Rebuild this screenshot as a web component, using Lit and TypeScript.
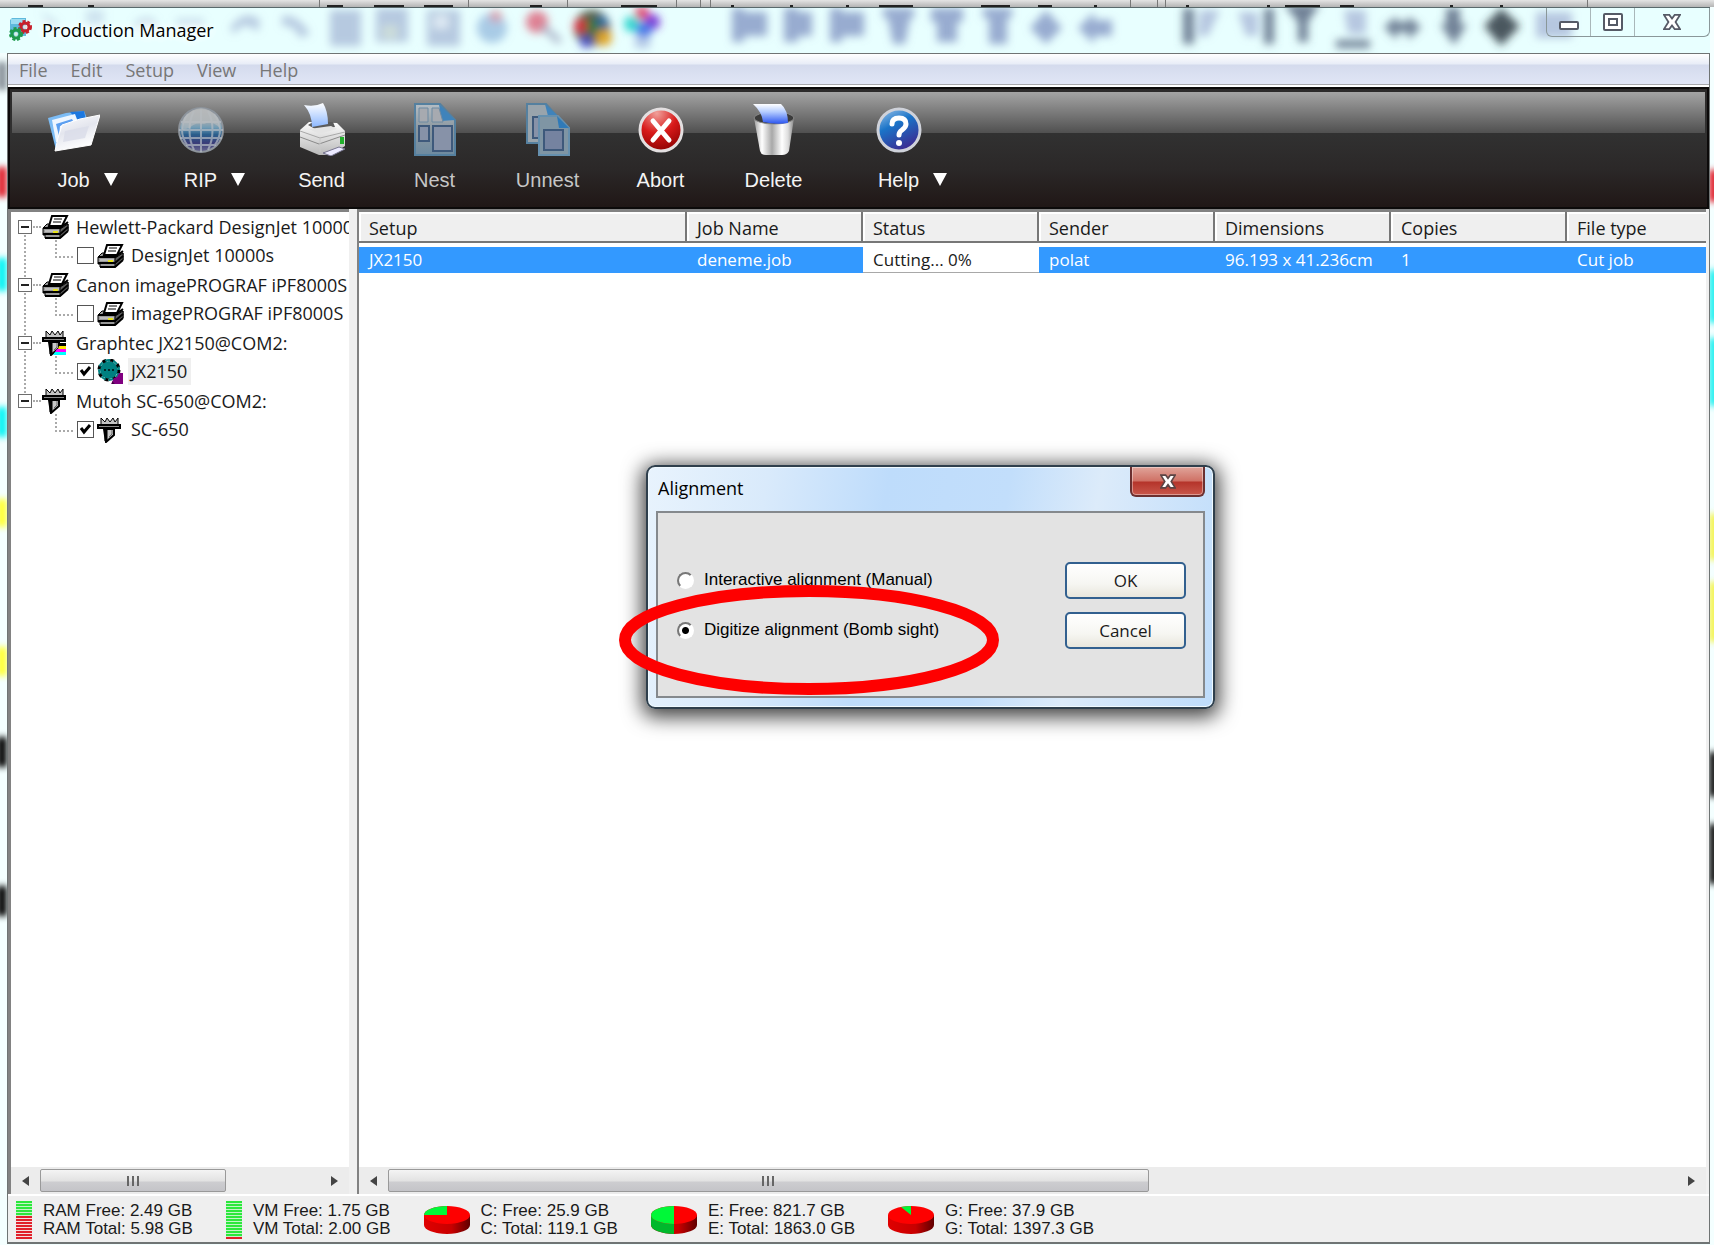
import { LitElement, html, svg, css, nothing } from "lit";
import { customElement, state } from "lit/decorators.js";
import { classMap } from "lit/directives/class-map.js";

type DeviceIcon = "printer" | "cutter" | "cutter-color" | "gear";

interface TreeChild {
  id: string;
  name: string;
  icon: DeviceIcon;
  checked: boolean;
  selected?: boolean;
}

interface TreeGroup {
  name: string;
  icon: DeviceIcon;
  children: TreeChild[];
}

interface Tool {
  label: string;
  icon: unknown;
  menu?: boolean;
  dim?: boolean;
}

const TREE: TreeGroup[] = [
  {
    name: "Hewlett-Packard DesignJet 10000s",
    icon: "printer",
    children: [{ id: "dj", name: "DesignJet 10000s", icon: "printer", checked: false }],
  },
  {
    name: "Canon imagePROGRAF iPF8000S",
    icon: "printer",
    children: [{ id: "ipf", name: "imagePROGRAF iPF8000S", icon: "printer", checked: false }],
  },
  {
    name: "Graphtec JX2150@COM2:",
    icon: "cutter-color",
    children: [{ id: "jx", name: "JX2150", icon: "gear", checked: true, selected: true }],
  },
  {
    name: "Mutoh SC-650@COM2:",
    icon: "cutter",
    children: [{ id: "sc", name: "SC-650", icon: "cutter", checked: true }],
  },
];

const COLUMNS = ["Setup", "Job Name", "Status", "Sender", "Dimensions", "Copies", "File type"];
const JOBS = [["JX2150", "deneme.job", "Cutting... 0%", "polat", "96.193 x 41.236cm", "1", "Cut job"]];

/* ---------- small device icons ---------- */

const printerIcon = html`<svg class="dev" width="28" height="26" viewBox="0 0 28 26" aria-hidden="true">
  <path d="M1 14 L5 10 H26 V17 L18 24 H3 V21 H1 Z" fill="#9a9a9a" stroke="#000" stroke-width="1" />
  <path d="M18 15 L26 10 V17 L18 24 Z" fill="#5e5e5e" stroke="#000" stroke-width="1" />
  <path d="M7 12 L10 2 H25 L20 12 Z" fill="#fff" stroke="#000" stroke-width="2" />
  <path d="M12 5 H20 M11 8 H19" stroke="#000" stroke-width="1" />
  <path d="M1 14 H18 L26 8" fill="none" stroke="#000" stroke-width="2" />
  <path d="M3 17 H17" stroke="#bdbdbd" stroke-width="2" />
  <path d="M11 18 H16" stroke="#e6e21c" stroke-width="2" />
  <path d="M1 20 H18 L26 13 M3 24 H18 L26 17" fill="none" stroke="#000" stroke-width="2" />
</svg>`;

const cutterBody = svg`
  <path d="M4 8 V1 L8 5 L10 1 L13 5 L16 1 L18 5 L21 1 V8 Z" fill="#c4c4c4" stroke="#000" stroke-width="1" />
  <path d="M1 8 H23 V11 H1 Z" fill="#8a8a8a" stroke="#000" stroke-width="2" />
  <path d="M7 12 H17 V18 L9 25 Z" fill="#c8c8c8" stroke="#000" stroke-width="2" />
  <path d="M9 12 V24" stroke="#000" stroke-width="3" />
  <path d="M15 13 V17 L12 20" stroke="#666" fill="none" />`;

const cutterIcon = html`<svg class="dev" width="28" height="26" viewBox="0 0 28 26" aria-hidden="true">
  ${cutterBody}
</svg>`;

const cutterColorIcon = html`<svg class="dev" width="28" height="26" viewBox="0 0 28 26" aria-hidden="true">
  ${cutterBody}
  <path d="M17 13 H24 V16 H17 Z" fill="#000" />
  <path d="M17 16 H24 V19 H16 Z" fill="#ffe600" />
  <path d="M15 19 H24 V22 H13 Z" fill="#f0f" />
  <path d="M13 22 H24 V25 H11 Z" fill="#0ff" />
</svg>`;

const gearIcon = html`<svg class="dev" width="28" height="26" viewBox="0 0 28 26" aria-hidden="true">
  <circle cx="12" cy="11" r="9" fill="#008080" />
  <circle cx="12" cy="11" r="10" fill="none" stroke="#000" stroke-width="3" stroke-dasharray="4 4" />
  <circle cx="12" cy="11" r="10" fill="none" stroke="#008080" stroke-width="2" stroke-dasharray="5 3" stroke-dashoffset="5" />
  <path d="M7 11 H18" stroke="#002a2a" stroke-width="2" stroke-dasharray="2 2" />
  <path d="M14 25 L17 19 L20 18 L22 14 H26 V25 Z" fill="#800080" />
  <path d="M13 20 L18 25 H15 V22 Z" fill="#400040" />
</svg>`;

const deviceIcon = (kind: DeviceIcon) =>
  kind === "printer" ? printerIcon : kind === "gear" ? gearIcon : kind === "cutter" ? cutterIcon : cutterColorIcon;

/* ---------- toolbar icons ---------- */

const jobIcon = html`<svg width="52" height="54" viewBox="0 0 52 54" aria-hidden="true">
  <defs>
    <linearGradient id="fold" x1="0" y1="0" x2="0.4" y2="1">
      <stop offset="0" stop-color="#fff" /><stop offset="0.5" stop-color="#e4e6ee" /><stop offset="1" stop-color="#fff" />
    </linearGradient>
  </defs>
  <path d="M0 16 L18 11 L36 9 L38 14 L42 30 L8 48 Z" fill="#7cbcf5" />
  <path d="M22 10 L36 9 L38 18 L30 19 Z" fill="#1c78e0" />
  <path d="M4 18 L27 12 L30 20 L14 40 L8 40 Z" fill="#eef6ff" />
  <path d="M8 22 L24 17 L26 21 L12 24 L11 34 Z" fill="#5c9ff0" />
  <path d="M14 23 L32 17 L52 13 L43 43 L7 49 L10 36 Z" fill="url(#fold)" stroke="#fff" stroke-width="1" />
  <path d="M17 29 L41 24 L37 36 L15 40 Z" fill="#d9dce8" opacity="0.8" />
</svg>`;

const ripIcon = html`<svg width="46" height="54" viewBox="0 0 46 54" aria-hidden="true">
  <defs>
    <linearGradient id="globe" x1="0" y1="0" x2="0" y2="1">
      <stop offset="0" stop-color="#b4b4b4" /><stop offset="0.3" stop-color="#a3abb0" /><stop offset="0.45" stop-color="#6f9bb5" />
      <stop offset="0.6" stop-color="#2a5f8c" /><stop offset="0.8" stop-color="#3a3c78" /><stop offset="1" stop-color="#6c6c92" />
    </linearGradient>
  </defs>
  <circle cx="23" cy="28" r="22" fill="url(#globe)" stroke="#8d949c" stroke-width="2" />
  <g fill="none" stroke="#b5bcc4" stroke-width="2" opacity="0.7">
    <path d="M3 20 H43 M1 28 H45 M2 36 H44 M8 43 H38" />
    <path d="M23 8 V50 M16 9 C10 20 10 36 16 48 M30 9 C36 20 36 36 30 48 M10 12 C2 22 2 34 10 44 M36 12 C44 22 44 34 36 44" />
  </g>
  <path d="M6 16 Q23 -4 40 16 L42 26 Q34 18 26 22 Q16 20 12 26 L4 28 Z" fill="#b9bcbe" opacity="0.6" />
</svg>`;

const sendIcon = html`<svg width="46" height="54" viewBox="0 0 46 54" aria-hidden="true">
  <defs>
    <linearGradient id="sheet" x1="0" y1="0" x2="0" y2="1">
      <stop offset="0" stop-color="#fff" /><stop offset="1" stop-color="#8db8ff" />
    </linearGradient>
    <linearGradient id="box" x1="0" y1="0" x2="0" y2="1">
      <stop offset="0" stop-color="#fdfdfd" /><stop offset="1" stop-color="#b9b9b9" />
    </linearGradient>
  </defs>
  <path d="M1 28 L10 20 L38 21 L46 29 V44 L32 53 H20 L1 45 Z" fill="url(#box)" />
  <path d="M1 29 L21 36 L46 30" fill="none" stroke="#a8a8a8" stroke-width="1" />
  <path d="M1 35 L20 42 L46 33" fill="none" stroke="#8a8a8a" stroke-width="1" />
  <path d="M9 23 L14 20 H34 L36 25 L18 28 Z" fill="#5b5b5b" />
  <path d="M5 3 Q16 5 24 1 Q29 9 29 22 L13 25 Q13 12 5 3 Z" fill="url(#sheet)" />
  <path d="M10 27 L32 24 L38 27 L20 32 Z" fill="#e4e4e4" />
  <path d="M21 37 V50" stroke="#c9c9c9" />
  <path d="M24 51 L40 45 L46 47 L32 54 Z" fill="#eceaff" stroke="#77758f" stroke-width="1" />
  <rect x="41" y="35" width="4" height="7" fill="#21b02c" />
</svg>`;

const nestIcon = html`<svg width="42" height="54" viewBox="0 0 42 54" aria-hidden="true">
  <defs>
    <linearGradient id="page" x1="0" y1="0" x2="0" y2="1">
      <stop offset="0" stop-color="#b5bdc4" /><stop offset="0.5" stop-color="#8b979f" /><stop offset="1" stop-color="#6d8aa0" />
    </linearGradient>
  </defs>
  <path d="M1 2 H26 L41 18 V53 H1 Z" fill="url(#page)" stroke="#55809f" stroke-width="2" />
  <path d="M25 2 L41 18 L27 19 Z" fill="#3f83bb" />
  <g fill="#8792a8" stroke="#3e597b" stroke-width="2">
    <rect x="5" y="24" width="10" height="15" />
    <rect x="19" y="24" width="19" height="25" />
  </g>
  <path d="M5 6 H14 V20 H5 Z M18 6 H25 L29 20 H18 Z" fill="#a7aab0" stroke="#6d8aa2" stroke-width="1" />
</svg>`;

const unnestIcon = html`<svg width="44" height="54" viewBox="0 0 44 54" aria-hidden="true">
  <path d="M1 2 H20 L30 13 V41 H1 Z" fill="#99a4ac" stroke="#55809f" stroke-width="2" />
  <path d="M19 2 L32 14 H22 Z" fill="#3f83bb" />
  <rect x="7" y="15" width="12" height="21" fill="#8792a8" stroke="#3e597b" stroke-width="2" />
  <path d="M13 14 H32 L43 26 V53 H13 Z" fill="#7f95a4" stroke="#6690ae" stroke-width="2" />
  <path d="M31 14 L43 26 H33 Z" fill="#2f7ab8" />
  <rect x="18" y="28" width="19" height="20" fill="#7583a0" stroke="#3e597b" stroke-width="2" />
</svg>`;

const abortIcon = html`<svg width="46" height="54" viewBox="0 0 46 54" aria-hidden="true">
  <defs>
    <radialGradient id="red" cx="0.4" cy="0.1" r="0.95">
      <stop offset="0" stop-color="#f0a09a" /><stop offset="0.5" stop-color="#d81a1a" /><stop offset="1" stop-color="#8a0000" />
    </radialGradient>
  </defs>
  <circle cx="23" cy="28" r="21" fill="url(#red)" stroke="#e3dfe0" stroke-width="3" />
  <path d="M15 19 L31 38 M31 19 L15 38" stroke="#fff" stroke-width="5" stroke-linecap="round" />
</svg>`;

const deleteIcon = html`<svg width="42" height="54" viewBox="0 0 42 54" aria-hidden="true">
  <defs>
    <linearGradient id="bin" x1="0" y1="0" x2="1" y2="0">
      <stop offset="0" stop-color="#9d9d9d" /><stop offset="0.2" stop-color="#fff" /><stop offset="0.45" stop-color="#a8a8a8" />
      <stop offset="0.7" stop-color="#fff" /><stop offset="0.85" stop-color="#ddd" /><stop offset="1" stop-color="#888" />
    </linearGradient>
    <linearGradient id="note" x1="0" y1="0" x2="0" y2="1">
      <stop offset="0" stop-color="#fff" /><stop offset="0.4" stop-color="#b4ccff" /><stop offset="1" stop-color="#2b55f0" />
    </linearGradient>
  </defs>
  <path d="M1 16 H41 L36 49 Q34 53 29 53 H13 Q8 53 7 49 Z" fill="url(#bin)" />
  <ellipse cx="21" cy="16" rx="20" ry="6" fill="#3b3b3b" stroke="#8a8a8a" stroke-width="1" />
  <path d="M0 2 H28 Q35 8 35 21 Q23 23 10 20 Q9 10 0 2 Z" fill="url(#note)" />
</svg>`;

const helpIcon = html`<svg width="46" height="54" viewBox="0 0 46 54" aria-hidden="true">
  <defs>
    <linearGradient id="blue" x1="0" y1="0" x2="0.5" y2="1">
      <stop offset="0" stop-color="#a4c8ea" /><stop offset="0.45" stop-color="#1a74c8" /><stop offset="1" stop-color="#3a2f94" />
    </linearGradient>
  </defs>
  <circle cx="23" cy="28" r="21" fill="url(#blue)" stroke="#cfd2da" stroke-width="3" />
  <path d="M16 22 Q16 16 23 16 Q30 16 30 22 Q30 25 26 28 Q23 30 23 33" fill="none" stroke="#fff" stroke-width="5" stroke-linecap="round" />
  <circle cx="23" cy="41" r="3" fill="#fff" />
</svg>`;

const TOOL_GROUPS: Tool[][] = [
  [
    { label: "Job", icon: jobIcon, menu: true },
    { label: "RIP", icon: ripIcon, menu: true },
  ],
  [
    { label: "Send", icon: sendIcon },
    { label: "Nest", icon: nestIcon, dim: true },
    { label: "Unnest", icon: unnestIcon, dim: true },
    { label: "Abort", icon: abortIcon },
    { label: "Delete", icon: deleteIcon },
  ],
  [{ label: "Help", icon: helpIcon, menu: true }],
];

/* ---------- status bar ---------- */

const memoryBar = (freeRows: number) => html`<svg width="16" height="38" viewBox="0 0 16 38" aria-hidden="true">
  <rect width="16" height="38" fill="#f4dede" />
  <rect width="16" height=${freeRows * 3} fill="#c4f4c8" />
  ${Array.from({ length: 13 }, (_, i) =>
    i < freeRows
      ? svg`<rect y=${i * 3} width="16" height="2" fill="#2be83c" />`
      : svg`<rect y=${i * 3} width="16" height="2" fill="#e0202a" />`
  )}
</svg>`;

const pie = (id: string, slice: unknown, side: unknown = nothing) => html`<svg width="46" height="30" viewBox="0 0 46 30" aria-hidden="true">
  <defs>
    <linearGradient id=${id} x1="0" y1="0" x2="1" y2="0">
      <stop offset="0" stop-color="#e00000" /><stop offset="0.6" stop-color="#c80000" /><stop offset="1" stop-color="#600000" />
    </linearGradient>
  </defs>
  <path d="M0 10 V20 A23 9 0 0 0 46 20 V10 Z" fill="url(#${id})" />
  ${side}
  <ellipse cx="23" cy="10" rx="23" ry="9" fill="#fe0000" />
  ${slice}
</svg>`;

const STATUS = [
  { icon: memoryBar(5), free: "RAM Free: 2.49 GB", total: "RAM Total: 5.98 GB" },
  { icon: memoryBar(12), free: "VM Free: 1.75 GB", total: "VM Total: 2.00 GB" },
  {
    icon: pie("pie-c", svg`<path d="M23 10 H0 A23 9 0 0 1 23 1 Z" fill="#00f838" />`),
    free: "C: Free: 25.9 GB",
    total: "C: Total: 119.1 GB",
  },
  {
    icon: pie(
      "pie-e",
      svg`<path d="M23 1 A23 9 0 0 0 23 19 Z" fill="#00f838" />`,
      svg`<path d="M0 10 V20 A23 9 0 0 0 23 29 V10 Z" fill="#00b82c" />`
    ),
    free: "E: Free: 821.7 GB",
    total: "E: Total: 1863.0 GB",
  },
  {
    icon: pie("pie-g", svg`<path d="M23 10 L13 2 Q18 1 23 1 Z" fill="#00f838" />`),
    free: "G: Free: 37.9 GB",
    total: "G: Total: 1397.3 GB",
  },
];

/* ---------- application behind the glass frame ---------- */

const mark = (x: number, w: number) => svg`<rect x=${x} y="5" width=${w} height="2" fill="#222" />`;
const sep = (x: number) => svg`<rect x=${x} y="0" width="1" height="7" fill="#777" />`;
const spot = (side: "l" | "r", y: number, h: number, color: string) =>
  html`<i class="spot ${side}" style="top:${y}px;height:${h}px;background:${color}"></i>`;

const behindStrip = html`<svg class="strip" width="2400" height="8" aria-hidden="true">
  ${[319, 468, 567, 676, 700, 710, 1130, 1157, 1165, 1587].map(sep)}
  ${[[28, 15], [88, 6], [327, 16], [374, 30], [424, 29], [530, 12], [621, 36], [731, 3], [790, 3], [846, 3], [879, 34], [981, 29], [1038, 14], [1094, 3], [1186, 3], [1267, 3], [1285, 35], [1340, 14], [1450, 3], [1500, 3]].map(
    ([x, w]) => mark(x, w)
  )}
</svg>`;

const glassBlobs = html`<svg class="blobs" width="2400" height="46" aria-hidden="true">
  <defs>
    <filter id="soft" x="-20%" y="-60%" width="140%" height="220%"><feGaussianBlur stdDeviation="4" /></filter>
  </defs>
  <g filter="url(#soft)">
    <g fill="#94a6cc" opacity="0.6">
      <path d="M40 2 L60 16 L50 20 Z M86 2 H104 V16 H86 Z M134 14 Q146 4 156 12 V20 H134 Z M176 10 H204 V18 H176 Z" opacity="0.5" />
      <path d="M230 20 Q244 0 260 12 L258 24 Q244 10 234 26 Z M282 8 Q298 6 310 26 L300 30 Q294 16 282 18 Z" />
      <path d="M330 2 H361 V38 H330 Z M376 0 H408 V34 H376 Z M427 2 H460 V38 H427 Z" />
    </g>
    <rect x="383" y="18" width="14" height="12" fill="#cfe0d8" opacity="0.9" />
    <rect x="434" y="8" width="14" height="12" fill="#dfeaf4" />
    <circle cx="492" cy="20" r="15" fill="#7fa9d6" opacity="0.6" />
    <circle cx="496" cy="8" r="6" fill="#e28a94" opacity="0.7" />
    <circle cx="537" cy="14" r="11" fill="#dc4a64" opacity="0.7" />
    <path d="M542 18 L560 34" stroke="#9a9fb8" stroke-width="7" opacity="0.7" />
    <circle cx="592" cy="20" r="18" fill="#56604e" />
    <circle cx="581" cy="18" r="7" fill="#d6283c" />
    <circle cx="604" cy="30" r="8" fill="#e0a628" />
    <circle cx="602" cy="14" r="6" fill="#2c6aa0" />
    <circle cx="586" cy="34" r="6" fill="#5050c8" />
    <circle cx="592" cy="18" r="6" fill="#2c7a34" />
    <circle cx="632" cy="16" r="8" fill="#30d8d0" />
    <circle cx="652" cy="14" r="8" fill="#7a38d8" />
    <circle cx="642" cy="5" r="7" fill="#e04870" />
    <circle cx="644" cy="22" r="8" fill="#4878e8" />
    <rect x="635" y="28" width="15" height="12" fill="#a8bce0" opacity="0.8" />
    <g fill="#7c90c0" opacity="0.75">
      <path d="M732 0 H744 V34 H732 Z M742 4 H767 V28 H742 Z" />
      <path d="M784 0 H798 V34 H784 Z M794 4 H812 V28 H794 Z" />
      <path d="M830 0 H842 V34 H830 Z M842 4 H864 V28 H842 Z" />
      <path d="M883 0 H914 V10 H910 L905 36 H893 L888 10 H883 Z" />
      <path d="M931 0 H963 V14 H957 V34 H937 V14 H931 Z" />
      <path d="M983 0 H1012 V10 H1007 V36 H989 V10 H983 Z" />
      <path d="M1046 2 L1062 20 L1046 36 L1030 20 Z M1078 20 L1094 4 V12 H1112 V28 H1094 V36 Z" />
    </g>
    <g fill="#5c6b84" opacity="0.85">
      <path d="M1183 0 H1194 V36 H1183 Z" />
      <path d="M1264 0 H1274 V36 H1264 Z" />
      <path d="M1284 -4 H1320 L1308 14 V34 H1298 V14 Z" />
      <path d="M1336 32 H1370 V40 H1336 Z" />
      <path d="M1384 19 L1397 8 V14 H1408 V8 L1421 19 L1408 32 V24 H1397 V32 Z" />
      <path d="M1446 0 H1460 V16 H1467 L1454 37 L1440 16 H1446 Z" />
      <path d="M1501 0 L1520 18 L1501 38 L1484 18 Z" fill="#2d3a42" />
    </g>
    <g fill="#94a2cc" opacity="0.6">
      <path d="M1200 2 H1220 L1208 28 H1198 Z M1238 4 H1258 V28 H1246 Z M1344 2 H1366 V26 H1348 Z M1536 4 H1572 V30 H1536 Z" />
    </g>
  </g>
</svg>`;

@customElement("app-root")
export class AppRoot extends LitElement {
  @state() private alignment = "digitize";

  static styles = css`
    :host {
      display: block;
      font-family: "Open Sans", "Noto Sans", sans-serif;
      font-size: 18px;
      line-height: 24px;
      color: #1a1a1a;
    }
    * {
      box-sizing: border-box;
    }
    button,
    input {
      font: inherit;
      color: inherit;
      margin: 0;
    }
    svg {
      display: block;
      flex: none;
    }
    .desktop {
      position: relative;
      overflow: hidden;
      min-height: 100vh;
      display: flex;
      flex-direction: column;
      padding: 7px 4px 1px 0;
      background: linear-gradient(#e4e4e4, #b4b4b4 7px, #f4ffff 7px);
    }
    .strip,
    .blobs {
      position: absolute;
      left: 0;
      top: 0;
    }
    .spot {
      position: absolute;
      width: 10px;
      filter: blur(3px);
    }
    .spot.l {
      left: -3px;
    }
    .spot.r {
      right: -5px;
    }
    .window {
      position: relative;
      flex: 1;
      display: flex;
      flex-direction: column;
      border-top: 1px solid #59696c;
    }
    .titlebar {
      position: relative;
      overflow: hidden;
      height: 45px;
      display: flex;
      align-items: center;
      gap: 9px;
      padding: 0 0 2px 8px;
      background: #e8ffff;
    }
    .titlebar .logo,
    .titlebar .title {
      position: relative;
    }
    .title {
      flex: 1;
      margin: 0;
      font-size: 18px;
      font-weight: 400;
      color: #000;
      text-shadow: 0 0 8px #fff, 0 0 8px #fff, 0 0 12px #fff;
    }
    .caption {
      position: relative;
      align-self: flex-start;
      display: flex;
      height: 29px;
      border: 1px solid #8a9799;
      border-top: 0;
      border-radius: 0 0 6px 6px;
    }
    .caption button {
      display: grid;
      place-items: center;
      width: 44px;
      padding: 0;
      border: 0;
      border-right: 1px solid #a9b7b9;
      background: none;
    }
    .caption button:last-child {
      width: 74px;
      border-right: 0;
    }
    .frame {
      flex: 1;
      display: flex;
      flex-direction: column;
      margin-left: 7px;
      border: 1px solid #6f7474;
      border-width: 1px 1px 2px;
      background: #f0f0f0;
    }
    .menubar {
      display: flex;
      gap: 1px;
      height: 33px;
      align-items: center;
      border-bottom: 2px solid #fff;
      box-shadow: inset 0 -1px #a8a8ac;
      background: linear-gradient(#fff, #e8edf7 10px, #d4dbed 11px, #e1e6f6);
    }
    .menubar button {
      padding: 0 11px;
      border: 0;
      background: none;
      color: #777;
    }
    .toolbar {
      display: flex;
      height: 122px;
      border: 2px solid #0c0a0a;
      padding: 13px 7px 0;
      background: linear-gradient(#a4a4a4, #505050) 2px 3px / calc(100% - 4px) 41px no-repeat,
        linear-gradient(#2c2a2a, #313131 45px, #2b2828 80px, #201716);
      color: #f4f4f4;
      font-family: "Liberation Sans", Arial, sans-serif;
      font-size: 20px;
    }
    .tool-group {
      display: flex;
    }
    .tool-group:first-child {
      gap: 6px;
    }
    .tool-group:last-child {
      margin-left: 12px;
    }
    .tool {
      display: flex;
      flex-direction: column;
      align-items: center;
      width: 113px;
      padding: 0;
      border: 0;
      background: none;
    }
    .tool.menu {
      margin-right: 8px;
    }
    .tool-group:first-child .tool:last-child {
      margin-right: 0;
      width: 121px;
      padding-right: 8px;
    }
    .tool.dim {
      color: #c6c6c6;
    }
    .tool-label {
      display: grid;
      grid-template-columns: 1fr auto 1fr;
      width: 100%;
      margin-top: 12px;
    }
    .tool-label span {
      grid-column: 2;
    }
    .tool-label .drop {
      grid-column: 3;
      margin: 5px 0 0 14px;
    }
    .panes {
      flex: 1;
      display: grid;
      grid-template-columns: 341px minmax(0, 1fr);
      gap: 8px;
      padding-right: 3px;
    }
    .pane {
      display: flex;
      flex-direction: column;
      min-width: 0;
      border-top: 3px solid #828282;
      border-left: 3px solid #828282;
      background: #fff;
    }
    .jobs {
      border-left-width: 2px;
    }
    .pane-body {
      flex: 1;
      overflow: hidden;
    }
    .tree,
    .tree ul {
      list-style: none;
      margin: 0;
      padding: 0;
      white-space: nowrap;
    }
    .tree-row {
      display: flex;
      align-items: center;
      height: 29px;
    }
    .group {
      position: relative;
    }
    .group:not(:last-child)::before {
      content: "";
      position: absolute;
      left: 13px;
      top: 15px;
      height: 58px;
      border-left: 2px dotted #aaa;
    }
    .group > .tree-row {
      padding-left: 7px;
    }
    .expander {
      position: relative;
      flex: none;
      display: grid;
      place-items: center;
      width: 14px;
      height: 14px;
      padding: 0;
      border: 1px solid #6d6d6d;
      background: #fff;
    }
    .expander::before {
      content: "";
      width: 8px;
      height: 2px;
      background: #222;
    }
    .dots {
      flex: none;
      width: 8px;
      border-top: 2px dotted #aaa;
      margin: 0 1px;
    }
    .group > .tree-row .name {
      margin-left: 6px;
    }
    .branch {
      flex: none;
      width: 18px;
      height: 18px;
      margin: 0 4px 14px 44px;
      border: 2px dotted #aaa;
      border-width: 0 0 2px 2px;
    }
    .check {
      appearance: none;
      flex: none;
      width: 17px;
      height: 17px;
      margin-right: 3px;
      border: 1px solid #555;
      background: #fff;
    }
    .check:checked {
      background: #fff
        url('data:image/svg+xml,<svg xmlns="http://www.w3.org/2000/svg" viewBox="0 0 15 15"><path d="M3 6 L6 10 L12 3" fill="none" stroke="black" stroke-width="3"/></svg>')
        center / 15px no-repeat;
    }
    .child {
      display: flex;
      align-items: center;
    }
    .child .name {
      padding: 0 4px 0 3px;
      margin-left: 3px;
      line-height: 27px;
    }
    .child .name.selected {
      background: #efefef;
    }
    table {
      width: 100%;
      table-layout: fixed;
      border-collapse: separate;
      border-spacing: 0;
      white-space: nowrap;
    }
    .c-wide {
      width: 328px;
    }
    .c {
      width: 176px;
    }
    th,
    td {
      padding: 0 0 0 10px;
      text-align: left;
      font-weight: 400;
      overflow: hidden;
    }
    th {
      height: 31px;
      padding-top: 3px;
      background: #efefef;
      border-right: 2px solid #777;
      border-bottom: 2px solid #777;
      box-shadow: inset 2px 2px #fff;
    }
    th:last-child {
      border-right: 0;
    }
    td {
      height: 30px;
      font-size: 17px;
      border-top: 4px solid #fff;
      background: #3399ff;
      color: #fff;
    }
    td.status {
      background: #fff;
      color: #1a1a1a;
      border-bottom: 1px solid #a8a8a8;
    }
    .scroll {
      display: flex;
      align-items: center;
      justify-content: space-between;
      height: 27px;
      background: #ececec;
    }
    .scroll button {
      display: grid;
      place-items: center;
      width: 29px;
      height: 27px;
      padding: 0;
      border: 0;
      background: none;
    }
    .track {
      flex: 1;
    }
    .thumb {
      display: flex;
      align-items: center;
      justify-content: center;
      gap: 3px;
      width: 186px;
      height: 23px;
      border: 1px solid #999;
      border-radius: 2px;
      background: linear-gradient(#f4f4f4, #e2e2e2 11px, #cdcdd0 12px, #c4c4c8);
    }
    .thumb i {
      width: 2px;
      height: 10px;
      background: #666;
    }
    .jobs .thumb {
      width: 59%;
    }
    .statusbar {
      display: flex;
      align-items: center;
      gap: 33px;
      height: 48px;
      padding: 2px 8px 0;
      border-top: 2px solid #fff;
      background: #efefef;
      font-family: "Liberation Sans", Arial, sans-serif;
      font-size: 17px;
      line-height: 18px;
      white-space: nowrap;
    }
    .stat {
      display: flex;
      align-items: center;
      gap: 11px;
    }
    .stat p {
      margin: 0;
    }
    .dialog {
      position: absolute;
      left: 646px;
      top: 465px;
      width: 569px;
      height: 244px;
      display: flex;
      flex-direction: column;
      padding: 0 8px 9px;
      border: 2px solid #2f3f4c;
      border-radius: 9px;
      background: linear-gradient(100deg, #e8f3fd, #d9eafb 20%, #bedcfb 40%, #c2defb 60%, #dcebfa 75%, #bedcfb);
      box-shadow: inset 0 0 0 1px #f0faff, 0 4px 20px 4px rgba(0, 0, 0, 0.75);
    }
    .dialog-bar {
      display: flex;
      height: 44px;
      justify-content: space-between;
    }
    .dialog-bar h2 {
      margin: 9px 0 0 2px;
      font-size: 18px;
      font-weight: 400;
      color: #000;
    }
    .close {
      display: grid;
      place-items: center;
      width: 75px;
      height: 30px;
      padding: 0;
      border: 2px solid #6b3030;
      border-top: 0;
      border-radius: 0 0 6px 6px;
      background: linear-gradient(#e0a49a, #cf7165 14px, #b5342a 15px, #c8574b);
      box-shadow: inset 0 0 0 1px rgba(255, 255, 255, 0.4);
    }
    .client {
      flex: 1;
      display: flex;
      justify-content: space-between;
      padding: 49px 17px 0 19px;
      border: 2px solid #85898d;
      background: #e3e3e3;
    }
    .options {
      display: flex;
      flex-direction: column;
      gap: 14px;
    }
    .options label {
      display: flex;
      align-items: center;
      gap: 10px;
      height: 36px;
      font-family: "Liberation Sans", Arial, sans-serif;
      font-size: 17px;
      color: #000;
    }
    .radio {
      appearance: none;
      width: 17px;
      height: 17px;
      border: 2px solid;
      border-color: #777 #fff #fff #777;
      border-radius: 50%;
      background: #fff;
    }
    .radio:checked {
      background: radial-gradient(#000 3px, #fff 4px);
    }
    .actions {
      display: flex;
      flex-direction: column;
      gap: 13px;
    }
    .actions button {
      width: 121px;
      height: 37px;
      padding: 0;
      border: 2px solid #32608f;
      border-radius: 5px;
      background: linear-gradient(#fff, #f6f6f2 60%, #e8e6dc);
      font-size: 17px;
    }
    .ring {
      position: absolute;
      left: 619px;
      top: 585px;
      pointer-events: none;
    }
  `;

  private renderTool(tool: Tool) {
    return html`<button class=${classMap({ tool: true, menu: !!tool.menu, dim: !!tool.dim })}>
      ${tool.icon}
      <span class="tool-label">
        <span>${tool.label}</span>
        ${tool.menu
          ? html`<svg class="drop" width="14" height="14" viewBox="0 0 14 14" aria-hidden="true">
              <path d="M0 0 H14 L7 13 Z" fill="#fff" />
            </svg>`
          : nothing}
      </span>
    </button>`;
  }

  private renderGroup(group: TreeGroup) {
    return html`<li class="group">
      <div class="tree-row">
        <button class="expander" aria-label="Collapse ${group.name}"></button>
        <span class="dots"></span>${deviceIcon(group.icon)}<span class="name">${group.name}</span>
      </div>
      <ul>
        ${group.children.map(
          (c) => html`<li class="tree-row">
            <span class="branch"></span>
            <input class="check" type="checkbox" id=${c.id} .checked=${c.checked} />
            <label class="child" for=${c.id}>
              ${deviceIcon(c.icon)}<span class=${classMap({ name: true, selected: !!c.selected })}>${c.name}</span>
            </label>
          </li>`
        )}
      </ul>
    </li>`;
  }

  private renderScroll() {
    return html`<div class="scroll">
      <button aria-label="Scroll left">
        <svg width="7" height="10" viewBox="0 0 7 10"><path d="M7 0 V10 L0 5 Z" fill="#444" /></svg>
      </button>
      <div class="track"><div class="thumb"><i></i><i></i><i></i></div></div>
      <button aria-label="Scroll right">
        <svg width="7" height="10" viewBox="0 0 7 10"><path d="M0 0 V10 L7 5 Z" fill="#444" /></svg>
      </button>
    </div>`;
  }

  private renderRadio(value: string, label: string) {
    return html`<label>
      <input
        class="radio"
        type="radio"
        name="alignment"
        .checked=${this.alignment === value}
        @change=${() => (this.alignment = value)}
      />${label}
    </label>`;
  }

  render() {
    return html`<div class="desktop">
      ${behindStrip}
      ${spot("l", 62, 28, "#8a949c")} ${spot("l", 167, 30, "#e0202c")} ${spot("l", 258, 33, "#00f4f4")}
      ${spot("l", 407, 30, "#00f4f4")} ${spot("l", 499, 28, "#ffff30")} ${spot("l", 647, 29, "#ffff30")}
      ${spot("l", 737, 30, "#000")} ${spot("l", 886, 30, "#000")}
      ${spot("r", 170, 32, "#e0202c")} ${spot("r", 270, 53, "#20f0f0")} ${spot("r", 338, 68, "#20f0f0")}
      ${spot("r", 514, 46, "#f4f450")} ${spot("r", 582, 60, "#f4f450")} ${spot("r", 752, 45, "#111")}
      ${spot("r", 824, 60, "#111")}
      <main class="window">
        <header class="titlebar">
          ${glassBlobs}
          <svg class="logo" width="25" height="26" viewBox="0 0 25 26" aria-hidden="true">
            <path d="M2 3 L4 1 H18 V19 H2 Z" fill="#5fb9dc" />
            <path d="M3 2 H17 V7 H3 Z" fill="#9bdcf0" />
            <circle cx="17" cy="10" r="4" fill="none" stroke="#c8202c" stroke-width="3" />
            <circle cx="17" cy="10" r="6" fill="none" stroke="#c8202c" stroke-width="2" stroke-dasharray="3 2" />
            <circle cx="8" cy="17" r="4" fill="none" stroke="#1f9a4c" stroke-width="3" />
            <circle cx="8" cy="17" r="6" fill="none" stroke="#1f9a4c" stroke-width="2" stroke-dasharray="3 2" />
            <circle cx="17" cy="10" r="2" fill="#e6dfe2" />
            <circle cx="8" cy="17" r="2" fill="#d6f0e4" />
          </svg>
          <h1 class="title">Production Manager</h1>
          <div class="caption">
            <button aria-label="Minimize">
              <svg width="20" height="20" viewBox="0 0 20 20">
                <rect x="1" y="10" width="18" height="7" rx="1" fill="#fff" stroke="#555a66" stroke-width="2" />
              </svg>
            </button>
            <button aria-label="Restore">
              <svg width="20" height="18" viewBox="0 0 20 18">
                <rect x="1" y="1" width="18" height="16" rx="1" fill="#fff" stroke="#555a66" stroke-width="2" />
                <rect x="6" y="6" width="8" height="6" fill="#fff" stroke="#555a66" stroke-width="2" />
              </svg>
            </button>
            <button aria-label="Close">
              <svg width="18" height="16" viewBox="0 0 20 18">
                <path d="M1 1 H7 L10 5 L13 1 H19 L14 9 L19 17 H13 L10 13 L7 17 H1 L6 9 Z" fill="#fff" stroke="#555a66" stroke-width="2" />
              </svg>
            </button>
          </div>
        </header>
        <div class="frame">
          <nav class="menubar">
            ${["File", "Edit", "Setup", "View", "Help"].map((m) => html`<button>${m}</button>`)}
          </nav>
          <div class="toolbar">
            ${TOOL_GROUPS.map((g) => html`<div class="tool-group">${g.map((t) => this.renderTool(t))}</div>`)}
          </div>
          <div class="panes">
            <section class="pane">
              <div class="pane-body">
                <ul class="tree">
                  ${TREE.map((g) => this.renderGroup(g))}
                </ul>
              </div>
              ${this.renderScroll()}
            </section>
            <section class="pane jobs">
              <div class="pane-body">
                <table>
                  <colgroup>
                    <col class="c-wide" />
                    <col class="c" /><col class="c" /><col class="c" /><col class="c" /><col class="c" />
                    <col />
                  </colgroup>
                  <thead>
                    <tr>
                      ${COLUMNS.map((c) => html`<th scope="col">${c}</th>`)}
                    </tr>
                  </thead>
                  <tbody>
                    ${JOBS.map(
                      (row) => html`<tr>
                        ${row.map((v, i) => html`<td class=${i === 2 ? "status" : ""}>${v}</td>`)}
                      </tr>`
                    )}
                  </tbody>
                </table>
              </div>
              ${this.renderScroll()}
            </section>
          </div>
          <footer class="statusbar">
            ${STATUS.map(
              (s) => html`<div class="stat">
                ${s.icon}
                <div><p>${s.free}</p><p>${s.total}</p></div>
              </div>`
            )}
          </footer>
        </div>
      </main>
      <section class="dialog" role="dialog" aria-labelledby="dialog-title">
        <div class="dialog-bar">
          <h2 id="dialog-title">Alignment</h2>
          <button class="close" aria-label="Close dialog">
            <svg width="16" height="15" viewBox="0 0 20 18">
              <path d="M1 1 H7 L10 5 L13 1 H19 L14 9 L19 17 H13 L10 13 L7 17 H1 L6 9 Z" fill="#fff" stroke="#5b4444" stroke-width="2" />
            </svg>
          </button>
        </div>
        <form class="client" @submit=${(e: Event) => e.preventDefault()}>
          <div class="options">
            ${this.renderRadio("interactive", "Interactive alignment (Manual)")}
            ${this.renderRadio("digitize", "Digitize alignment (Bomb sight)")}
          </div>
          <div class="actions">
            <button type="submit">OK</button>
            <button type="button">Cancel</button>
          </div>
        </form>
      </section>
      <svg class="ring" width="380" height="110" viewBox="0 0 380 110" aria-hidden="true">
        <ellipse cx="190" cy="55" rx="184" ry="49" fill="none" stroke="#fe0000" stroke-width="12" />
      </svg>
    </div>`;
  }
}
